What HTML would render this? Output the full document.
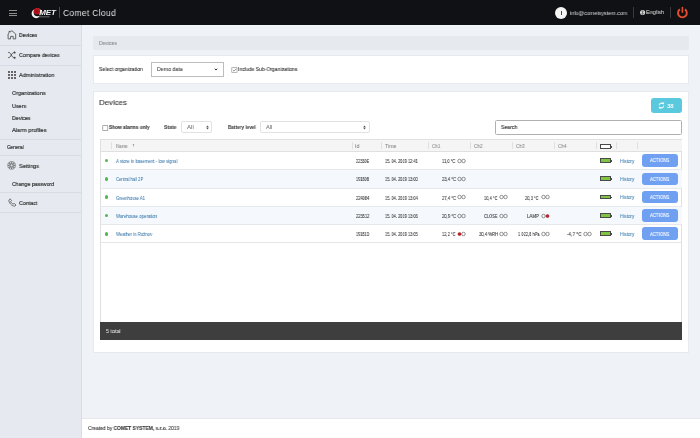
<!DOCTYPE html>
<html><head><meta charset="utf-8">
<style>
*{box-sizing:border-box;margin:0;padding:0}
html,body{width:700px;height:438px;overflow:hidden;font-family:"Liberation Sans",sans-serif;background:#eff2f6;color:#333}
.a{position:absolute}
.t{position:absolute;white-space:nowrap;line-height:1;transform-origin:0 0;will-change:transform;-webkit-text-stroke:0.08px currentColor}
.hl{position:absolute;height:1px}
.vl{position:absolute;width:1px}
.dot{position:absolute;width:3.7px;height:3.7px;border-radius:50%;background:#52b652}
.ring{position:absolute;width:4.1px;height:4.1px;border-radius:50%;border:0.55px solid #777}
.red{background:#b3262c;border-color:#b3262c}
.bat{position:absolute;width:11px;height:4.8px;border:0.6px solid #4a4a4a;background:#80c444}
.bat:after{content:"";position:absolute;right:-1.8px;top:1.1px;width:1.2px;height:1.6px;background:#4a4a4a}
.btn{position:absolute;left:642px;width:36px;height:12.5px;border-radius:3px;background:#6fa0f1}
</style></head><body>
<!-- header -->
<div class="a" style="left:0;top:0;width:700px;height:24.5px;background:#101115"></div>
<div class="hl" style="left:0;top:25px;width:82px;background:#eef1f6"></div>
<div class="hl" style="left:82px;top:25px;width:618px;background:#f3f6f9"></div>
<!-- hamburger -->
<div class="a" style="left:9px;top:10px;width:7.5px;height:0.9px;background:#8c8c8c"></div>
<div class="a" style="left:9px;top:12.6px;width:7.5px;height:0.9px;background:#8c8c8c"></div>
<div class="a" style="left:9px;top:15px;width:7.5px;height:0.9px;background:#8c8c8c"></div>
<!-- logo -->
<svg class="a" style="left:30px;top:6px;will-change:transform" width="28" height="14" viewBox="0 0 28 14">
  <path fill-rule="evenodd" d="M1.6 7.6 A4.6 4.6 0 1 0 10.8 7.6 A4.6 4.6 0 1 0 1.6 7.6Z M3.6 6.3 A3.9 3.9 0 1 0 11.4 6.3 A3.9 3.9 0 1 0 3.6 6.3Z" fill="#f2f2f2"/>
  <circle cx="7" cy="5.3" r="3.25" fill="#b8141b"/>
  <circle cx="6.6" cy="5.6" r="1.6" fill="#8e0d12" opacity="0.6"/>
  <text x="9.2" y="8.8" font-family="Liberation Sans" font-weight="700" font-style="italic" font-size="8" fill="#f4f4f4" textLength="16.8" lengthAdjust="spacingAndGlyphs">MET</text>
  <rect x="9.2" y="10.2" width="10.4" height="1.2" fill="#5c5c5c"/>
</svg>
<div class="a" style="left:59.3px;top:6.6px;width:1px;height:11.6px;background:#48484c"></div>
<!-- avatar -->
<div class="a" style="left:555px;top:7.2px;width:12.3px;height:12.3px;border-radius:50%;background:#f4f4f4"></div>
<div class="a" style="left:560.8px;top:11.4px;width:0.8px;height:4px;background:#444"></div>
<div class="a" style="left:633.2px;top:7px;width:0.9px;height:11px;background:#3a3a3e"></div>
<div class="a" style="left:670.3px;top:7px;width:0.9px;height:11px;background:#3a3a3e"></div>
<svg class="a" style="left:639px;top:9px" width="7" height="7" viewBox="0 0 7 7"><circle cx="3.6" cy="3.6" r="2.5" fill="#e8e8e8"/><path d="M2.3 2.6 Q3.6 3.4 4.9 2.6 M2.3 4.6 Q3.6 3.8 4.9 4.6 M3.6 1.2 V6" stroke="#333" stroke-width="0.5" fill="none"/></svg>
<svg class="a" style="left:676px;top:6px" width="13" height="13" viewBox="0 0 13 13"><path d="M3.9 3.4 A4.4 4.4 0 1 0 8.9 3.4" stroke="#e44d2c" stroke-width="1.9" fill="none" stroke-linecap="butt"/><path d="M6.4 1.5 V6.2" stroke="#e44d2c" stroke-width="1.6" stroke-linecap="round"/></svg>

<!-- sidebar -->
<div class="a" style="left:0;top:24.5px;width:82px;height:414px;background:#e6eaf0"></div>
<div class="vl" style="left:81px;top:24.5px;height:414px;background:#d9dee6"></div>
<div class="hl" style="left:0;top:45px;width:81px;background:#d8dde5"></div>
<div class="hl" style="left:0;top:65px;width:81px;background:#d8dde5"></div>
<div class="hl" style="left:0;top:139px;width:81px;background:#d8dde5"></div>
<div class="hl" style="left:0;top:155px;width:81px;background:#d8dde5"></div>
<div class="hl" style="left:0;top:192px;width:81px;background:#d8dde5"></div>
<div class="hl" style="left:0;top:211.5px;width:81px;background:#d8dde5"></div>
<!-- sidebar icons -->
<svg class="a" style="left:7px;top:30px" width="10" height="10" viewBox="0 0 10 10"><path d="M1.1 4 L2 3.2 V1.3 H3.2 V2.1 L4.9 0.7 L8.7 4 V8.9 H6.2 V6.4 H3.6 V8.9 H1.1 Z" stroke="#555" stroke-width="0.9" fill="none" stroke-linejoin="round"/></svg>
<svg class="a" style="left:4px;top:48px" width="16" height="14" viewBox="0 0 16 14"><path d="M4.1 4.3 C5.9 4.3 6.5 5.6 7.3 7 C8.1 8.4 8.9 9.7 10.4 9.8 M4.1 9.7 C5.9 9.7 6.5 8.4 7.3 7 C8.1 5.6 8.9 4.5 10.4 4.4" stroke="#474747" stroke-width="0.85" fill="none"/><circle cx="10.6" cy="9.8" r="1.05" fill="#444"/><path d="M9.6 5.2 L10.7 3.1 L11.7 5.2 Z" fill="#444"/><circle cx="10.6" cy="4.6" r="0.8" fill="#444"/></svg>
<svg class="a" style="left:8px;top:70.8px" width="9" height="9" viewBox="0 0 9 9" fill="#666"><rect x="0" y="0" width="2" height="2"/><rect x="3" y="0" width="2" height="2"/><rect x="6" y="0" width="2" height="2"/><rect x="0" y="3" width="2" height="2"/><rect x="3" y="3" width="2" height="2"/><rect x="6" y="3" width="2" height="2"/><rect x="0" y="6" width="2" height="2"/><rect x="3" y="6" width="2" height="2"/><rect x="6" y="6" width="2" height="2"/></svg>
<svg class="a" style="left:7px;top:161px" width="9" height="9" viewBox="0 0 9 9"><g stroke="#4a4a4a" stroke-width="0.5" fill="none"><circle cx="7.00" cy="5.39" r="1.5"/><circle cx="5.59" cy="6.80" r="1.5"/><circle cx="3.61" cy="6.80" r="1.5"/><circle cx="2.20" cy="5.39" r="1.5"/><circle cx="2.20" cy="3.41" r="1.5"/><circle cx="3.61" cy="2.00" r="1.5"/><circle cx="5.59" cy="2.00" r="1.5"/><circle cx="7.00" cy="3.41" r="1.5"/></g><circle cx="4.6" cy="4.4" r="0.9" fill="#e6eaf0"/></svg>
<svg class="a" style="left:8px;top:198px" width="9" height="9" viewBox="0 0 9 9"><path d="M2.2 0.8 L0.9 2 C0.5 4.5 3.6 8.2 6.8 8.2 L8 7 L6.2 5.4 L5 6.2 C3.8 5.6 3 4.6 2.6 3.6 L3.6 2.6 Z" stroke="#444" stroke-width="0.7" fill="none" stroke-linejoin="round"/></svg>

<!-- breadcrumb -->
<div class="a" style="left:93px;top:36.3px;width:596px;height:13.6px;background:#e6e9ed;border-radius:2px"></div>
<!-- filter panel -->
<div class="a" style="left:93px;top:55px;width:596px;height:28.5px;background:#fff;border:1px solid #e6e9ed"></div>
<div class="a" style="left:151px;top:62.2px;width:73px;height:14.8px;border:0.8px solid #bdbdbd;background:#fff"></div>
<svg class="a" style="left:214.4px;top:67.6px" width="4" height="3" viewBox="0 0 4 3"><path d="M0.7 0.8 L2 2 L3.3 0.8" stroke="#2a2a2a" stroke-width="1" fill="none"/></svg>
<svg class="a" style="left:230.5px;top:66.5px" width="7" height="6" viewBox="0 0 7 6"><rect x="0.8" y="0.7" width="5.2" height="4.8" fill="#fff" stroke="#8a8a8a" stroke-width="0.6"/><path d="M1.8 3 L3 4.2 L5.2 1.7" stroke="#555" stroke-width="0.6" fill="none"/></svg>

<!-- devices panel -->
<div class="a" style="left:93px;top:91px;width:596px;height:261.5px;background:#fff;border:1px solid #e6e9ed"></div>
<div class="a" style="left:651px;top:98px;width:31px;height:15.2px;background:#5bc9dd;border-radius:3px"></div>
<svg class="a" style="left:658.3px;top:102.2px" width="7" height="7" viewBox="0 0 7 7"><path d="M1.2 3.2 A2.3 2.3 0 0 1 5.2 1.9 M5.8 3.8 A2.3 2.3 0 0 1 1.8 5.1" stroke="#f4feff" stroke-width="1.1" fill="none"/><path d="M4.1 0.4 L6.2 0.5 L5.9 2.8Z M2.9 6.6 L0.8 6.5 L1.1 4.2Z" fill="#f4feff"/></svg>
<svg class="a" style="left:101.5px;top:124.5px" width="7" height="6" viewBox="0 0 7 6"><rect x="0.8" y="0.7" width="5" height="4.8" fill="#fff" stroke="#777" stroke-width="0.6"/></svg>
<div class="a" style="left:181px;top:120.7px;width:31px;height:12.4px;border:0.7px solid #e2e2e2;border-radius:2px;background:#fff"></div>
<div class="a" style="left:260.4px;top:120.7px;width:109.4px;height:12.4px;border:0.7px solid #e2e2e2;border-radius:2px;background:#fff"></div>
<svg class="a" style="left:205.5px;top:125px" width="3" height="5" viewBox="0 0 3 5"><path d="M0.2 2.2 L1.5 0.4 L2.8 2.2Z M0.2 2.8 L1.5 4.6 L2.8 2.8Z" fill="#555"/></svg>
<svg class="a" style="left:362.8px;top:125px" width="3" height="5" viewBox="0 0 3 5"><path d="M0.2 2.2 L1.5 0.4 L2.8 2.2Z M0.2 2.8 L1.5 4.6 L2.8 2.8Z" fill="#555"/></svg>
<div class="a" style="left:495.3px;top:119.5px;width:186.7px;height:15px;border:0.7px solid #b0b0b0;border-radius:1.5px;background:#fff"></div>

<!-- table -->
<div class="a" style="left:100px;top:139.3px;width:582px;height:200.5px;border:0.8px solid #e0e0e0;background:#fff"></div>
<div class="a" style="left:100.5px;top:139.8px;width:581px;height:12.2px;background:#f5f5f5;border-bottom:0.8px solid #e0e0e0"></div>
<div class="a" style="left:100.5px;top:169.6px;width:581px;height:18.3px;background:#f5f8fc"></div>
<div class="a" style="left:100.5px;top:206.2px;width:581px;height:18.3px;background:#f5f8fc"></div>
<div class="hl" style="left:100.5px;top:169.2px;width:581px;background:#e6e9ec"></div>
<div class="hl" style="left:100.5px;top:187.5px;width:581px;background:#e6e9ec"></div>
<div class="hl" style="left:100.5px;top:205.8px;width:581px;background:#e6e9ec"></div>
<div class="hl" style="left:100.5px;top:224.1px;width:581px;background:#e6e9ec"></div>
<div class="hl" style="left:100.5px;top:242.2px;width:581px;background:#e3e6e9"></div>
<!-- header col separators -->
<div class="vl" style="left:110.5px;top:142px;height:7px;background:#e0e0e0"></div>
<div class="vl" style="left:351.6px;top:142px;height:7px;background:#e0e0e0"></div>
<div class="vl" style="left:380.5px;top:142px;height:7px;background:#e0e0e0"></div>
<div class="vl" style="left:427.7px;top:142px;height:7px;background:#e0e0e0"></div>
<div class="vl" style="left:469.5px;top:142px;height:7px;background:#e0e0e0"></div>
<div class="vl" style="left:511.5px;top:142px;height:7px;background:#e0e0e0"></div>
<div class="vl" style="left:553.5px;top:142px;height:7px;background:#e0e0e0"></div>
<div class="vl" style="left:595.5px;top:142px;height:7px;background:#e0e0e0"></div>
<div class="vl" style="left:615.5px;top:142px;height:7px;background:#e0e0e0"></div>
<div class="vl" style="left:637.4px;top:142px;height:7px;background:#e0e0e0"></div>
<!-- header battery -->
<div class="bat" style="left:600px;top:144.2px;background:#fff"></div>
<div class="dot" style="left:104.6px;top:158.75px"></div>
<div class="bat" style="left:600px;top:158.10px"></div>
<div class="btn" style="top:154.20px"></div>
<div class="dot" style="left:104.6px;top:177.05px"></div>
<div class="bat" style="left:600px;top:176.40px"></div>
<div class="btn" style="top:172.50px"></div>
<div class="dot" style="left:104.6px;top:195.35px"></div>
<div class="bat" style="left:600px;top:194.70px"></div>
<div class="btn" style="top:190.80px"></div>
<div class="dot" style="left:104.6px;top:213.65px"></div>
<div class="bat" style="left:600px;top:213.00px"></div>
<div class="btn" style="top:209.10px"></div>
<div class="dot" style="left:104.6px;top:231.95px"></div>
<div class="bat" style="left:600px;top:231.30px"></div>
<div class="btn" style="top:227.40px"></div>
<svg class="a" style="left:457px;top:157.60px" width="10" height="6" viewBox="0 0 10 6"><circle cx="2.5" cy="3" r="1.75" fill="none" stroke="#5a5a5a" stroke-width="0.65"/><circle cx="6.5" cy="3" r="1.75" fill="none" stroke="#5a5a5a" stroke-width="0.65"/></svg>
<svg class="a" style="left:457px;top:175.90px" width="10" height="6" viewBox="0 0 10 6"><circle cx="2.5" cy="3" r="1.75" fill="none" stroke="#5a5a5a" stroke-width="0.65"/><circle cx="6.5" cy="3" r="1.75" fill="none" stroke="#5a5a5a" stroke-width="0.65"/></svg>
<svg class="a" style="left:457px;top:194.20px" width="10" height="6" viewBox="0 0 10 6"><circle cx="2.5" cy="3" r="1.75" fill="none" stroke="#5a5a5a" stroke-width="0.65"/><circle cx="6.5" cy="3" r="1.75" fill="none" stroke="#5a5a5a" stroke-width="0.65"/></svg>
<svg class="a" style="left:457px;top:212.50px" width="10" height="6" viewBox="0 0 10 6"><circle cx="2.5" cy="3" r="1.75" fill="none" stroke="#5a5a5a" stroke-width="0.65"/><circle cx="6.5" cy="3" r="1.75" fill="none" stroke="#5a5a5a" stroke-width="0.65"/></svg>
<svg class="a" style="left:457px;top:230.80px" width="10" height="6" viewBox="0 0 10 6"><circle cx="2.5" cy="3" r="1.85" fill="#b0282c"/><circle cx="6.5" cy="3" r="1.75" fill="none" stroke="#5a5a5a" stroke-width="0.65"/></svg>
<svg class="a" style="left:499px;top:194.20px" width="10" height="6" viewBox="0 0 10 6"><circle cx="2.5" cy="3" r="1.75" fill="none" stroke="#5a5a5a" stroke-width="0.65"/><circle cx="6.5" cy="3" r="1.75" fill="none" stroke="#5a5a5a" stroke-width="0.65"/></svg>
<svg class="a" style="left:499px;top:212.50px" width="10" height="6" viewBox="0 0 10 6"><circle cx="2.5" cy="3" r="1.75" fill="none" stroke="#5a5a5a" stroke-width="0.65"/><circle cx="6.5" cy="3" r="1.75" fill="none" stroke="#5a5a5a" stroke-width="0.65"/></svg>
<svg class="a" style="left:499px;top:230.80px" width="10" height="6" viewBox="0 0 10 6"><circle cx="2.5" cy="3" r="1.75" fill="none" stroke="#5a5a5a" stroke-width="0.65"/><circle cx="6.5" cy="3" r="1.75" fill="none" stroke="#5a5a5a" stroke-width="0.65"/></svg>
<svg class="a" style="left:541px;top:194.20px" width="10" height="6" viewBox="0 0 10 6"><circle cx="2.5" cy="3" r="1.75" fill="none" stroke="#5a5a5a" stroke-width="0.65"/><circle cx="6.5" cy="3" r="1.75" fill="none" stroke="#5a5a5a" stroke-width="0.65"/></svg>
<svg class="a" style="left:541px;top:212.50px" width="10" height="6" viewBox="0 0 10 6"><circle cx="2.5" cy="3" r="1.75" fill="none" stroke="#5a5a5a" stroke-width="0.65"/><circle cx="6.5" cy="3" r="1.85" fill="#b0282c"/></svg>
<svg class="a" style="left:541px;top:230.80px" width="10" height="6" viewBox="0 0 10 6"><circle cx="2.5" cy="3" r="1.75" fill="none" stroke="#5a5a5a" stroke-width="0.65"/><circle cx="6.5" cy="3" r="1.75" fill="none" stroke="#5a5a5a" stroke-width="0.65"/></svg>
<svg class="a" style="left:583px;top:230.80px" width="10" height="6" viewBox="0 0 10 6"><circle cx="2.5" cy="3" r="1.75" fill="none" stroke="#5a5a5a" stroke-width="0.65"/><circle cx="6.5" cy="3" r="1.75" fill="none" stroke="#5a5a5a" stroke-width="0.65"/></svg>
<div class="a" style="left:100px;top:322px;width:582px;height:17.8px;background:#3e3e3e"></div>

<!-- footer -->
<div class="a" style="left:82px;top:418.3px;width:618px;height:20px;background:#fff;border-top:0.8px solid #e4e7eb"></div>
<div class="t" style="left:63.49px;top:7.60px;font-size:9.4px;font-weight:400;color:#e2e2e2;transform:scaleX(0.9054);-webkit-text-stroke:0;letter-spacing:0.35px;">Comet Cloud</div>
<div class="t" style="left:569.68px;top:11.00px;font-size:5.8px;font-weight:400;color:#dedee2;transform:scaleX(0.9242);-webkit-text-stroke:0;">info@cometsystem.com</div>
<div class="t" style="left:646.47px;top:9.40px;font-size:6.2px;font-weight:400;color:#e2e2e2;transform:scaleX(0.8899);-webkit-text-stroke:0;">English</div>
<div class="t" style="left:19.39px;top:31.80px;font-size:6.2px;font-weight:400;color:#1e1e1e;transform:scaleX(0.8227);-webkit-text-stroke:0.16px currentColor;">Devices</div>
<div class="t" style="left:19.39px;top:51.80px;font-size:6.2px;font-weight:400;color:#2b2b2b;transform:scaleX(0.8437);-webkit-text-stroke:0.16px currentColor;">Compare devices</div>
<div class="t" style="left:19.36px;top:71.80px;font-size:6.2px;font-weight:400;color:#2b2b2b;transform:scaleX(0.9045);-webkit-text-stroke:0.16px currentColor;">Administration</div>
<div class="t" style="left:11.67px;top:90.00px;font-size:6.0px;font-weight:400;color:#2b2b2b;transform:scaleX(0.9088);-webkit-text-stroke:0.16px currentColor;">Organizations</div>
<div class="t" style="left:11.77px;top:102.60px;font-size:6.0px;font-weight:400;color:#2b2b2b;transform:scaleX(0.9029);-webkit-text-stroke:0.16px currentColor;">Users</div>
<div class="t" style="left:11.79px;top:115.20px;font-size:6.0px;font-weight:400;color:#2b2b2b;transform:scaleX(0.8679);-webkit-text-stroke:0.16px currentColor;">Devices</div>
<div class="t" style="left:11.76px;top:126.90px;font-size:6.0px;font-weight:400;color:#2b2b2b;transform:scaleX(0.9397);-webkit-text-stroke:0.16px currentColor;">Alarm profiles</div>
<div class="t" style="left:6.52px;top:144.80px;font-size:5.3px;font-weight:400;color:#2b2b2b;transform:scaleX(0.8780);-webkit-text-stroke:0.16px currentColor;">General</div>
<div class="t" style="left:19.27px;top:162.50px;font-size:6.2px;font-weight:400;color:#2b2b2b;transform:scaleX(0.8929);-webkit-text-stroke:0.16px currentColor;">Settings</div>
<div class="t" style="left:11.89px;top:180.60px;font-size:6.0px;font-weight:400;color:#2b2b2b;transform:scaleX(0.8708);-webkit-text-stroke:0.16px currentColor;">Change password</div>
<div class="t" style="left:19.28px;top:199.90px;font-size:6.2px;font-weight:400;color:#2b2b2b;transform:scaleX(0.8647);-webkit-text-stroke:0.16px currentColor;">Contact</div>
<div class="t" style="left:99.40px;top:40.80px;font-size:5.4px;font-weight:400;color:#8a8a8a;transform:scaleX(0.9331);">Devices</div>
<div class="t" style="left:99.39px;top:66.80px;font-size:5.3px;font-weight:400;color:#333;transform:scaleX(0.9746);">Select organization</div>
<div class="t" style="left:156.79px;top:67.10px;font-size:5.3px;font-weight:400;color:#444;transform:scaleX(0.9847);">Demo data</div>
<div class="t" style="left:237.70px;top:67.20px;font-size:5.3px;font-weight:400;color:#333;transform:scaleX(0.9531);">Include Sub-Organizations</div>
<div class="t" style="left:99.43px;top:99.00px;font-size:8.1px;font-weight:400;color:#333;transform:scaleX(0.9704);-webkit-text-stroke:0.1px #333;">Devices</div>
<div class="t" style="left:108.71px;top:125.10px;font-size:5.3px;font-weight:700;color:#333;transform:scaleX(0.9007);">Show alarms only</div>
<div class="t" style="left:163.90px;top:125.00px;font-size:5.3px;font-weight:700;color:#444;transform:scaleX(0.9580);">State</div>
<div class="t" style="left:186.74px;top:125.00px;font-size:5.3px;font-weight:400;color:#777;transform:scaleX(1.1419);">All</div>
<div class="t" style="left:227.52px;top:125.00px;font-size:5.3px;font-weight:700;color:#444;transform:scaleX(0.8808);">Battery level</div>
<div class="t" style="left:265.76px;top:125.00px;font-size:5.3px;font-weight:400;color:#777;transform:scaleX(1.0657);">All</div>
<div class="t" style="left:500.79px;top:124.70px;font-size:5.6px;font-weight:400;color:#3a3a3a;transform:scaleX(0.9260);-webkit-text-stroke:0.15px currentColor;">Search</div>
<div class="t" style="left:666.64px;top:104.00px;font-size:5.5px;font-weight:400;color:#ffffff;transform:scaleX(1.0979);">38</div>
<div class="t" style="left:115.74px;top:143.60px;font-size:5.2px;font-weight:400;color:#8c8c8c;transform:scaleX(0.8245);">Name</div>
<div class="t" style="left:131.94px;top:142.90px;font-size:5.0px;font-weight:400;color:#8c8c8c;transform:scaleX(1.2105);">&#8593;</div>
<div class="t" style="left:355.38px;top:143.60px;font-size:5.2px;font-weight:400;color:#8c8c8c;transform:scaleX(1.0259);">Id</div>
<div class="t" style="left:384.89px;top:143.60px;font-size:5.2px;font-weight:400;color:#8c8c8c;transform:scaleX(1.0075);">Time</div>
<div class="t" style="left:432.13px;top:143.60px;font-size:5.2px;font-weight:400;color:#8c8c8c;transform:scaleX(0.8532);">Ch1</div>
<div class="t" style="left:473.72px;top:143.60px;font-size:5.2px;font-weight:400;color:#8c8c8c;transform:scaleX(0.8981);">Ch2</div>
<div class="t" style="left:515.72px;top:143.60px;font-size:5.2px;font-weight:400;color:#8c8c8c;transform:scaleX(0.8981);">Ch3</div>
<div class="t" style="left:557.72px;top:143.60px;font-size:5.2px;font-weight:400;color:#8c8c8c;transform:scaleX(0.8981);">Ch4</div>
<div class="t" style="left:115.84px;top:158.90px;font-size:5.5px;font-weight:400;color:#3b79ab;transform:scaleX(0.7909);-webkit-text-stroke:0.04px currentColor;">A store in basement - low signal</div>
<div class="t" style="left:355.97px;top:158.90px;font-size:5.3px;font-weight:400;color:#333;transform:scaleX(0.7261);">22330E</div>
<div class="t" style="left:385.16px;top:158.90px;font-size:5.3px;font-weight:400;color:#333;transform:scaleX(0.7417);">15. 04. 2019 12:41</div>
<div class="t" style="left:619.72px;top:158.60px;font-size:5.3px;font-weight:400;color:#5089b5;transform:scaleX(0.8708);">History</div>
<div class="t" style="left:650.05px;top:158.40px;font-size:5.0px;font-weight:400;color:#f4f8ff;transform:scaleX(0.8252);-webkit-text-stroke:0.15px currentColor;letter-spacing:0.2px;">ACTIONS</div>
<div class="t" style="left:115.85px;top:177.20px;font-size:5.5px;font-weight:400;color:#3b79ab;transform:scaleX(0.7539);-webkit-text-stroke:0.04px currentColor;">Central hall 2P</div>
<div class="t" style="left:355.97px;top:177.20px;font-size:5.3px;font-weight:400;color:#333;transform:scaleX(0.7261);">19180B</div>
<div class="t" style="left:385.16px;top:177.20px;font-size:5.3px;font-weight:400;color:#333;transform:scaleX(0.7417);">15. 04. 2019 13:00</div>
<div class="t" style="left:619.72px;top:176.90px;font-size:5.3px;font-weight:400;color:#5089b5;transform:scaleX(0.8708);">History</div>
<div class="t" style="left:650.05px;top:176.70px;font-size:5.0px;font-weight:400;color:#f4f8ff;transform:scaleX(0.8252);-webkit-text-stroke:0.15px currentColor;letter-spacing:0.2px;">ACTIONS</div>
<div class="t" style="left:115.85px;top:195.50px;font-size:5.5px;font-weight:400;color:#3b79ab;transform:scaleX(0.7558);-webkit-text-stroke:0.04px currentColor;">Greenhouse A1</div>
<div class="t" style="left:355.96px;top:195.50px;font-size:5.3px;font-weight:400;color:#333;transform:scaleX(0.7507);">224084</div>
<div class="t" style="left:385.16px;top:195.50px;font-size:5.3px;font-weight:400;color:#333;transform:scaleX(0.7417);">15. 04. 2019 13:04</div>
<div class="t" style="left:619.72px;top:195.20px;font-size:5.3px;font-weight:400;color:#5089b5;transform:scaleX(0.8708);">History</div>
<div class="t" style="left:650.05px;top:195.00px;font-size:5.0px;font-weight:400;color:#f4f8ff;transform:scaleX(0.8252);-webkit-text-stroke:0.15px currentColor;letter-spacing:0.2px;">ACTIONS</div>
<div class="t" style="left:115.84px;top:213.80px;font-size:5.5px;font-weight:400;color:#3b79ab;transform:scaleX(0.7868);-webkit-text-stroke:0.04px currentColor;">Warehouse operation</div>
<div class="t" style="left:355.96px;top:213.80px;font-size:5.3px;font-weight:400;color:#333;transform:scaleX(0.7507);">223512</div>
<div class="t" style="left:385.16px;top:213.80px;font-size:5.3px;font-weight:400;color:#333;transform:scaleX(0.7417);">15. 04. 2019 13:06</div>
<div class="t" style="left:619.72px;top:213.50px;font-size:5.3px;font-weight:400;color:#5089b5;transform:scaleX(0.8708);">History</div>
<div class="t" style="left:650.05px;top:213.30px;font-size:5.0px;font-weight:400;color:#f4f8ff;transform:scaleX(0.8252);-webkit-text-stroke:0.15px currentColor;letter-spacing:0.2px;">ACTIONS</div>
<div class="t" style="left:115.84px;top:232.10px;font-size:5.5px;font-weight:400;color:#3b79ab;transform:scaleX(0.7735);-webkit-text-stroke:0.04px currentColor;">Weather in Ro&#382;nov</div>
<div class="t" style="left:355.97px;top:232.10px;font-size:5.3px;font-weight:400;color:#333;transform:scaleX(0.7140);">19181D</div>
<div class="t" style="left:385.16px;top:232.10px;font-size:5.3px;font-weight:400;color:#333;transform:scaleX(0.7417);">15. 04. 2019 13:05</div>
<div class="t" style="left:619.72px;top:231.80px;font-size:5.3px;font-weight:400;color:#5089b5;transform:scaleX(0.8708);">History</div>
<div class="t" style="left:650.05px;top:231.60px;font-size:5.0px;font-weight:400;color:#f4f8ff;transform:scaleX(0.8252);-webkit-text-stroke:0.15px currentColor;letter-spacing:0.2px;">ACTIONS</div>
<div class="t" style="left:442.36px;top:158.90px;font-size:5.5px;font-weight:400;color:#333;transform:scaleX(0.7382);">11,0 &#176;C</div>
<div class="t" style="left:441.75px;top:177.20px;font-size:5.5px;font-weight:400;color:#333;transform:scaleX(0.7551);">23,4 &#176;C</div>
<div class="t" style="left:441.75px;top:195.50px;font-size:5.5px;font-weight:400;color:#333;transform:scaleX(0.7551);">27,4 &#176;C</div>
<div class="t" style="left:441.75px;top:213.80px;font-size:5.5px;font-weight:400;color:#333;transform:scaleX(0.7551);">20,9 &#176;C</div>
<div class="t" style="left:441.86px;top:232.10px;font-size:5.5px;font-weight:400;color:#333;transform:scaleX(0.7325);">12,2 &#176;C</div>
<div class="t" style="left:483.66px;top:195.50px;font-size:5.5px;font-weight:400;color:#333;transform:scaleX(0.7325);">10,4 &#176;C</div>
<div class="t" style="left:484.26px;top:213.80px;font-size:5.5px;font-weight:400;color:#333;transform:scaleX(0.7224);">CLOSE</div>
<div class="t" style="left:478.65px;top:232.10px;font-size:5.5px;font-weight:400;color:#333;transform:scaleX(0.7617);">30,4 %RH</div>
<div class="t" style="left:525.46px;top:195.50px;font-size:5.5px;font-weight:400;color:#333;transform:scaleX(0.7325);">20,3 &#176;C</div>
<div class="t" style="left:527.34px;top:213.80px;font-size:5.5px;font-weight:400;color:#333;transform:scaleX(0.7958);">LAMP</div>
<div class="t" style="left:517.66px;top:232.10px;font-size:5.5px;font-weight:400;color:#333;transform:scaleX(0.7273);">1 022,8 hPa</div>
<div class="t" style="left:567.22px;top:232.10px;font-size:5.5px;font-weight:400;color:#333;transform:scaleX(0.8410);">-4,7 &#176;C</div>
<div class="t" style="left:105.68px;top:328.10px;font-size:6.0px;font-weight:400;color:#dddddd;transform:scaleX(0.8952);">5 total</div>
<div class="t" style="left:87.60px;top:426.20px;font-size:5.4px;font-weight:400;color:#333;transform:scaleX(0.9131);">Created by <b>COMET SYSTEM, s.r.o.</b> 2019</div>
</body></html>
